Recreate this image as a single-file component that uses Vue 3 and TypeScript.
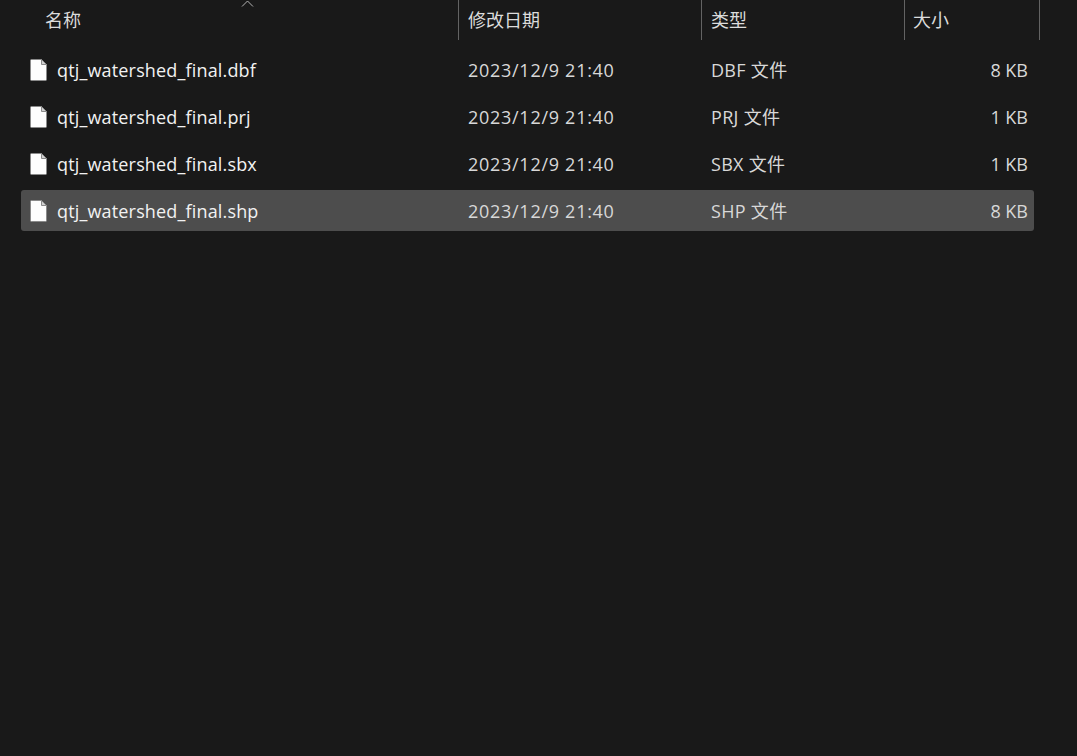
<script setup lang="ts">
interface FileRow { name: string; type: string; size: string; selected?: boolean }
const rows: FileRow[] = [
  { name: 'qtj_watershed_final.dbf', type: 'DBF 文件', size: '8 KB' },
  { name: 'qtj_watershed_final.prj', type: 'PRJ 文件', size: '1 KB' },
  { name: 'qtj_watershed_final.sbx', type: 'SBX 文件', size: '1 KB' },
  { name: 'qtj_watershed_final.shp', type: 'SHP 文件', size: '8 KB', selected: true },
]
</script>

<template>
  <div class="page">
    <div class="header">
      <div class="hcell name-h">
        名称
        <svg class="sort" width="14" height="7" viewBox="0 0 14 7"><path d="M1 6.5 L6.5 1 L12 6.5" fill="none" stroke="#b4b4b4" stroke-width="1"/></svg>
      </div>
      <div class="hcell date-h">修改日期</div>
      <div class="hcell type-h">类型</div>
      <div class="hcell size-h">大小</div>
    </div>
    <div class="list">
      <div v-for="r in rows" :key="r.name" class="row" :class="{ selected: r.selected }">
        <div class="name">
          <svg class="icon" width="17" height="22" viewBox="0 0 17 22">
            <path d="M0.5 1.5 a1 1 0 0 1 1 -1 H11.5 L16.5 5.5 V20.5 a1 1 0 0 1 -1 1 H1.5 a1 1 0 0 1 -1 -1 Z" fill="#fdfdfd" stroke="#8a8a8a" stroke-width="1"/>
            <path d="M11.5 0.5 V5.5 H16.5 Z" fill="#d0d0d0" stroke="#8a8a8a" stroke-width="1"/>
          </svg>
          <span>{{ r.name }}</span>
        </div>
        <div class="date">2023/12/9 21:40</div>
        <div class="type">{{ r.type }}</div>
        <div class="size">{{ r.size }}</div>
      </div>
    </div>
  </div>
</template>

<style>
html, body { margin: 0; background: #191919; }
</style>

<style scoped>
.page {
  width: 1077px;
  height: 756px;
  background: #191919;
  color: #e6e6e6;
  font-family: "Open Sans", "Noto Sans CJK SC", sans-serif;
  font-size: 18px;
  overflow: hidden;
}
.header {
  display: grid;
  grid-template-columns: 459px 243px 203px 135px;
  height: 40px;
}
.hcell {
  position: relative;
  box-sizing: border-box;
  height: 40px;
  line-height: 40px;
  border-right: 1px solid #636363;
  color: #dcdcdc;
  padding-left: 9px;
}
.name-h { padding-left: 45px; }
.size-h { padding-left: 8px; }
.sort { position: absolute; left: 241px; top: 0; }
.list {
  display: flex;
  flex-direction: column;
  gap: 6px;
  margin: 9px 43px 0 21px;
}
.row {
  display: grid;
  grid-template-columns: 438px 243px 203px 129px;
  box-sizing: border-box;
  height: 41px;
  padding-top: 1px;
  line-height: 40px;
  border-radius: 3px;
}
.row.selected { background: #4d4d4d; }
.name {
  display: flex;
  align-items: center;
  padding-left: 9px;
  color: #f2f2f2;
  letter-spacing: 0.16px;
}
.icon { margin-right: 10px; flex: none; }
.date { padding-left: 9px; color: #d8d8d8; letter-spacing: 0.72px; }
.type { padding-left: 9px; color: #d8d8d8; letter-spacing: 0.3px; }
.size { text-align: right; padding-right: 6px; color: #d8d8d8; }
</style>
